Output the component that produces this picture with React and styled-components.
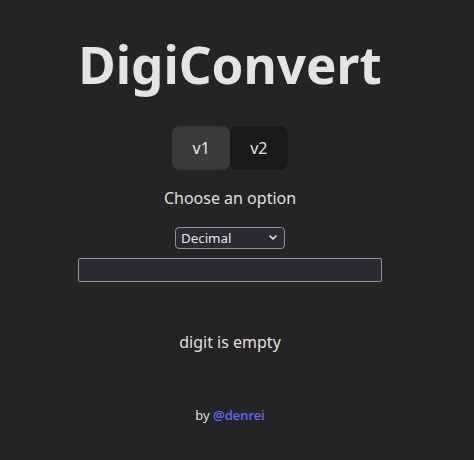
import styled, { createGlobalStyle } from "styled-components";
import { useState } from "react";

const GlobalStyle = createGlobalStyle`
  html, body {
    margin: 0;
    background: #242424;
  }
  body {
    font-family: "Noto Sans", "Open Sans", sans-serif;
    color: rgba(255, 255, 255, 0.87);
    -webkit-font-smoothing: antialiased;
  }
`;

const chevron =
  "data:image/svg+xml;utf8," +
  encodeURIComponent(
    '<svg xmlns="http://www.w3.org/2000/svg" width="8" height="5" viewBox="0 0 8 5"><path d="M1 1l3 3 3-3" fill="none" stroke="#ececee" stroke-width="1.6" stroke-linecap="round" stroke-linejoin="round"/></svg>'
  );

const Page = styled.div`
  width: 460px;
  min-height: 460px;
  display: flex;
  flex-direction: column;
  align-items: center;
  padding-top: 36px;
  box-sizing: border-box;
  text-align: center;
`;

const Title = styled.h1`
  margin: 0;
  font-size: 51.2px;
  line-height: 1.1;
  font-weight: 700;
  color: #e4e4e4;
`;

const Tabs = styled.div`
  display: flex;
  margin-top: 34px;
`;

const Tab = styled.button`
  font-family: inherit;
  font-size: 16px;
  font-weight: 400;
  line-height: 24px;
  padding: 9.6px 20.2px;
  border: none;
  border-radius: 8px;
  color: rgba(255, 255, 255, 0.9);
  background: ${(p) => (p.$active ? "#3a3a3a" : "#1a1a1a")};
  cursor: pointer;
`;

const Label = styled.p`
  margin: 16px 0 0;
  font-size: 16px;
  line-height: 24px;
`;

const Select = styled.select`
  margin-top: 17px;
  width: 110px;
  height: 22px;
  font-family: inherit;
  font-size: 13.33px;
  color: rgba(255, 255, 255, 0.9);
  background: #2b2a33 url("${chevron}") no-repeat right 7px center;
  border: 1px solid #8f8f9d;
  border-radius: 4px;
  padding: 0 20px 0 5px;
  appearance: none;
  -webkit-appearance: none;
`;

const Input = styled.input`
  margin-top: 9px;
  width: 304px;
  height: 24px;
  box-sizing: border-box;
  background: #2b2a33;
  border: 1px solid #8f8f9d;
  border-radius: 2px;
  color: rgba(255, 255, 255, 0.87);
  font-family: inherit;
`;

const Result = styled.p`
  margin: 48px 0 0;
  font-size: 16px;
  line-height: 24px;
`;

const Footer = styled.p`
  margin: 52px 0 0;
  font-size: 13px;
  line-height: 18px;

  a {
    color: #646cff;
    text-decoration: none;
    font-weight: 500;
  }
`;

export default function App() {
  const [version, setVersion] = useState(1);
  const [digit, setDigit] = useState("");

  return (
    <>
      <GlobalStyle />
      <Page>
        <Title>DigiConvert</Title>
        <Tabs>
          <Tab $active={version === 1} onClick={() => setVersion(1)}>v1</Tab>
          <Tab $active={version === 2} onClick={() => setVersion(2)}>v2</Tab>
        </Tabs>
        <Label>Choose an option</Label>
        <Select defaultValue="decimal">
          <option value="decimal">Decimal</option>
          <option value="binary">Binary</option>
          <option value="hex">Hexadecimal</option>
        </Select>
        <Input value={digit} onChange={(e) => setDigit(e.target.value)} />
        <Result>{digit ? digit : "digit is empty"}</Result>
        <Footer>
          by <a href="#">@denrei</a>
        </Footer>
      </Page>
    </>
  );
}
